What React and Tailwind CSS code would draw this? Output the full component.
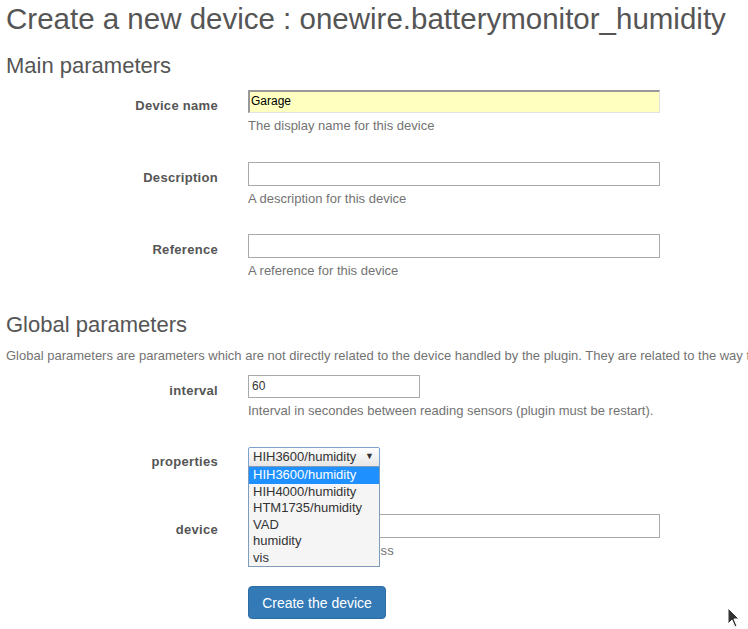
import React from 'react';

const mainFields = [
  { label: 'Device name', help: 'The display name for this device', value: 'Garage', filled: true },
  { label: 'Description', help: 'A description for this device' },
  { label: 'Reference', help: 'A reference for this device' },
];

const options = ['HIH3600/humidity', 'HIH4000/humidity', 'HTM1735/humidity', 'VAD', 'humidity', 'vis'];

function Label({ children, className = '' }) {
  return (
    <div className={`w-[218px] flex-shrink-0 text-right text-[13px] font-bold leading-[15px] tracking-[0.3px] text-[#555] ${className}`}>
      {children}
    </div>
  );
}

function Help({ children, className = '' }) {
  return <p className={`mt-[5px] text-[13px] leading-[16px] text-[#737373] whitespace-nowrap ${className}`}>{children}</p>;
}

export default function App() {
  return (
    <div className="relative w-[748px] h-[629px] overflow-hidden bg-white text-[#555] font-['Liberation_Sans',Arial,sans-serif]">
      <h1 className="pl-[6px] pt-[1px] text-[29.5px] leading-[36px] whitespace-nowrap">
        Create a new device : onewire.batterymonitor_humidity
      </h1>

      {/* Main parameters */}
      <h2 className="mt-[16px] pl-[6px] text-[22px] leading-[26px]">Main parameters</h2>
      <div className="mt-[11px]">
        {mainFields.map((f) => (
          <div key={f.label} className="flex h-[72px]">
            <Label className="pt-[8px]">{f.label}</Label>
            <div className="ml-[30px] w-[412px]">
              {f.filled ? (
                <div className="h-[23px] bg-[#ffffc0] border-t-2 border-l-2 border-r border-b border-t-[#999] border-l-[#999] border-r-[#e2e2e2] border-b-[#e2e2e2] text-[12px] leading-[19px] text-black pl-[1px]">
                  {f.value}
                </div>
              ) : (
                <div className="h-[24px] border border-[#a9a9a9] bg-white" />
              )}
              <Help>{f.help}</Help>
            </div>
          </div>
        ))}
      </div>

      {/* Global parameters */}
      <h2 className="mt-[6px] pl-[6px] text-[22px] leading-[26px]">Global parameters</h2>
      <p className="mt-[10px] pl-[6px] text-[13px] leading-[16px] text-[#737373] whitespace-nowrap overflow-hidden">
        Global parameters are parameters which are not directly related to the device handled by the plugin. They are related to the way t
      </p>

      <div className="mt-[11px]">
        <div className="flex h-[72px]">
          <Label className="pt-[8px]">interval</Label>
          <div className="ml-[30px]">
            <div className="w-[172px] h-[23px] border border-[#a9a9a9] bg-white text-[12px] leading-[21px] pl-[3px] text-[#333]">60</div>
            <Help>Interval in secondes between reading sensors (plugin must be restart).</Help>
          </div>
        </div>

        <div className="flex h-[67px]">
          <Label className="pt-[7px]">properties</Label>
          <div className="ml-[30px] relative">
            <div className="w-[132px] h-[20px] flex items-center justify-between rounded-[2px] border border-[#7da2ce] bg-gradient-to-b from-white to-[#e6e6e6] pl-[4px] pr-[5px] text-[13px] text-[#333]">
              <span>HIH3600/humidity</span>
              <span className="text-[9px] text-[#333]">▼</span>
            </div>
            <div className="absolute left-0 top-[19px] z-10 w-[132px] border border-[#7f9db9] bg-[#f5f5f5]">
              {options.map((o, i) => (
                <div
                  key={o}
                  className={`h-[16.5px] pl-[4px] text-[13px] leading-[16px] ${i === 0 ? 'bg-[#1e90ff] text-white' : 'text-[#333]'}`}
                >
                  {o}
                </div>
              ))}
            </div>
          </div>
        </div>

        <div className="flex h-[72px]">
          <Label className="pt-[8px]">device</Label>
          <div className="ml-[30px] w-[412px]">
            <div className="h-[24px] border border-[#a9a9a9] bg-white" />
            <Help className="tracking-[0.3px]">Onewire device address</Help>
          </div>
        </div>

        <div className="flex">
          <button className="ml-[248px] w-[138px] h-[33px] rounded-[4px] border border-[#2e6da4] bg-[#337ab7] text-white text-[14px] leading-[33px]">
            Create the device
          </button>
        </div>
      </div>

      {/* mouse pointer */}
      <svg className="absolute left-[727px] top-[607px]" width="14" height="22" viewBox="0 0 14 22">
        <path d="M1 1 L1 17 L5 13 L8 20 L10 19 L7 12 L12 12 Z" fill="#333" stroke="#fff" strokeWidth="1" />
      </svg>
    </div>
  );
}
